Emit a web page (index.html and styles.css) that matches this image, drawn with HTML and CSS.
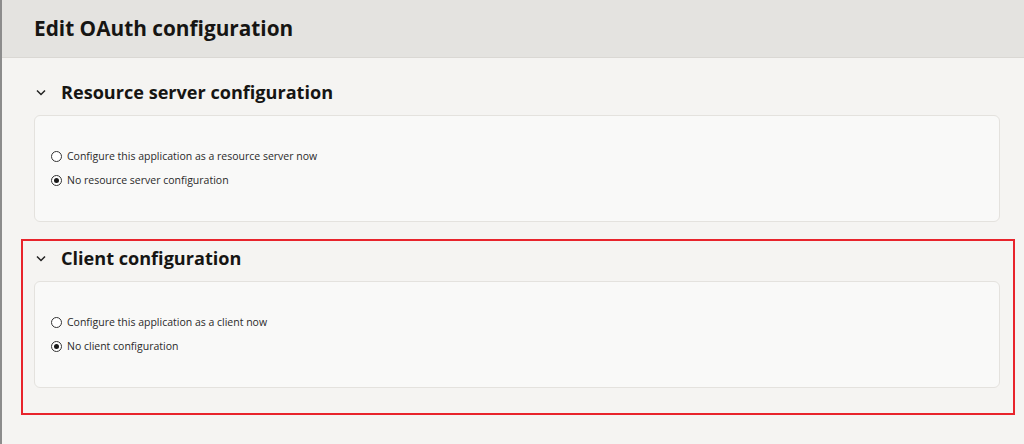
FILE: index.html
```html
<!DOCTYPE html>
<html lang="en">
<head>
<meta charset="utf-8">
<title>Edit OAuth configuration</title>
<link rel="stylesheet" href="styles.css">
</head>
<body>
<div class="page">
  <header class="page-header">
    <h1 class="page-title">Edit OAuth configuration</h1>
  </header>
  <main class="content">
    <section class="section">
      <div class="section-head">
        <svg class="chevron" width="10" height="7" viewBox="0 0 10 7"><path d="M1 1.5 L5 5.5 L9 1.5" fill="none" stroke="#222" stroke-width="1.5"/></svg>
        <h2 class="section-title">Resource server configuration</h2>
      </div>
      <div class="card">
        <label class="radio-row"><span class="radio"></span><span class="radio-label">Configure this application as a resource server now</span></label>
        <label class="radio-row"><span class="radio checked"></span><span class="radio-label">No resource server configuration</span></label>
      </div>
    </section>
    <section class="section highlighted">
      <div class="section-head">
        <svg class="chevron" width="10" height="7" viewBox="0 0 10 7"><path d="M1 1.5 L5 5.5 L9 1.5" fill="none" stroke="#222" stroke-width="1.5"/></svg>
        <h2 class="section-title">Client configuration</h2>
      </div>
      <div class="card">
        <label class="radio-row"><span class="radio"></span><span class="radio-label">Configure this application as a client now</span></label>
        <label class="radio-row"><span class="radio checked"></span><span class="radio-label">No client configuration</span></label>
      </div>
    </section>
  </main>
</div>
</body>
</html>
```
FILE: styles.css
```css
* { box-sizing: border-box; }
html, body { margin: 0; padding: 0; }
body {
  width: 1024px;
  height: 444px;
  overflow: hidden;
  background: #f5f4f2;
  font-family: "Open Sans", "Noto Sans", sans-serif;
  color: #1f1f1f;
}
.page {
  height: 444px;
  border-left: 2px solid #8c8c8c;
}
.page-header {
  height: 58px;
  background: #e4e3e0;
  border-bottom: 1px solid #dad8d4;
  padding: 14px 0 0 32px;
}
.page-title {
  margin: 0;
  font-size: 20.8px;
  font-weight: 700;
  line-height: 28px;
  color: #161513;
}
.content {
  padding: 15px 9px 0 19px;
}
.section {
  padding: 0 13px 0 11px;
  border: 2px solid transparent;
}
.section + .section {
  margin-top: 15px;
}
.section.highlighted {
  border-color: #e8242c;
  padding-bottom: 25px;
}
.section-head {
  display: flex;
  align-items: center;
  height: 34px;
}
.chevron {
  margin-left: 2px;
  margin-right: 15px;
  flex: none;
}
.section-title {
  margin: 0;
  font-size: 18.1px;
  font-weight: 700;
  line-height: 24px;
  color: #161513;
}
.card {
  margin-top: 6px;
  height: 107px;
  background: #f9f9f8;
  border: 1px solid #e4e2de;
  border-radius: 6px;
  padding: 32px 16px 0 16px;
  display: flex;
  flex-direction: column;
  gap: 8px;
}
.radio-row {
  display: flex;
  align-items: center;
  gap: 5px;
  height: 16px;
}
.radio {
  width: 11px;
  height: 11px;
  border: 1px solid #333;
  border-radius: 50%;
  background: #fff;
  flex: none;
  position: relative;
}
.radio.checked::after {
  content: "";
  position: absolute;
  left: 2px;
  top: 2px;
  width: 5px;
  height: 5px;
  border-radius: 50%;
  background: #1a1a1a;
}
.radio-label {
  font-size: 10.5px;
  color: #2a2a2a;
}
```
